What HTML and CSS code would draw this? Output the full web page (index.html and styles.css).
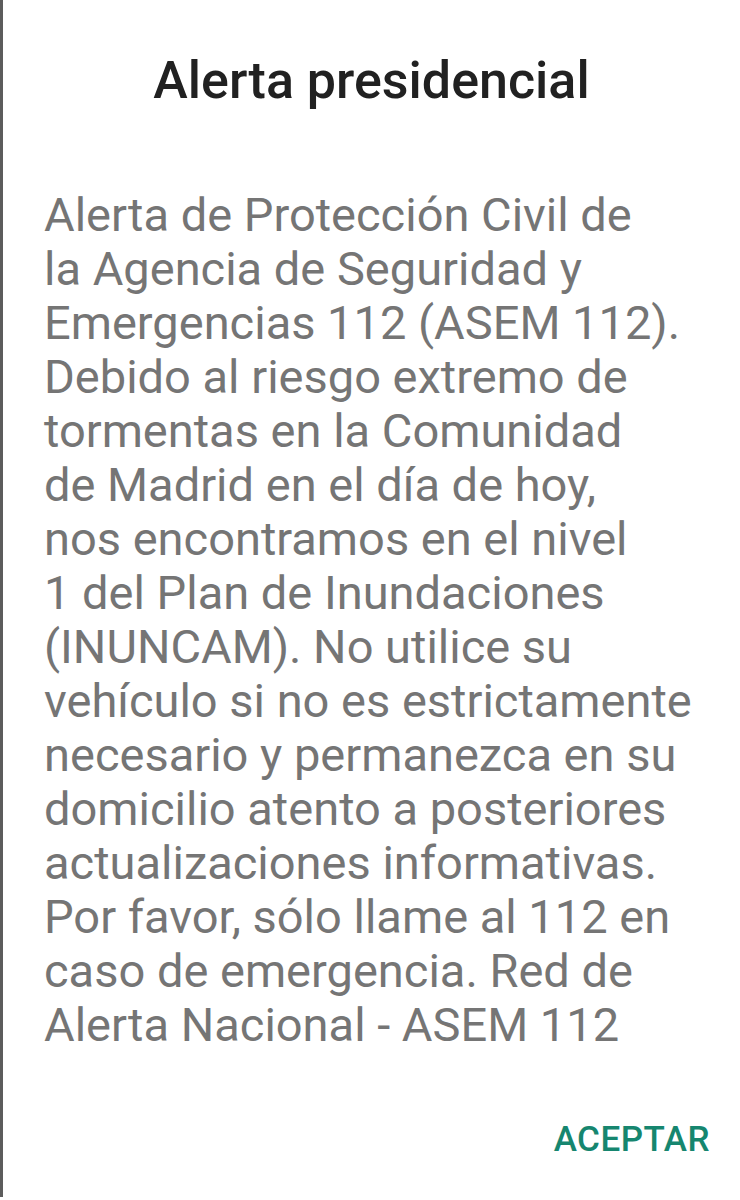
FILE: index.html
```html
<!DOCTYPE html>
<html lang="es">
<head>
<meta charset="utf-8">
<link rel="stylesheet" href="styles.css">
</head>
<body>
<div class="dialog">
  <h1 class="title">Alerta presidencial</h1>
  <p class="message">Alerta de Protección Civil de<br>la Agencia de Seguridad y<br>Emergencias 112 (ASEM 112).<br>Debido al riesgo extremo de<br>tormentas en la Comunidad<br>de Madrid en el día de hoy,<br>nos encontramos en el nivel<br>1 del Plan de Inundaciones<br>(INUNCAM). No utilice su<br>vehículo si no es estrictamente<br>necesario y permanezca en su<br>domicilio atento a posteriores<br>actualizaciones informativas.<br>Por favor, sólo llame al 112 en<br>caso de emergencia. Red de<br>Alerta Nacional - ASEM 112</p>
  <div class="actions">
    <button class="btn">ACEPTAR</button>
  </div>
</div>
</body>
</html>
```

FILE: styles.css
```css
html, body {
  margin: 0;
  padding: 0;
  background: #ffffff;
}
body {
  font-family: Roboto, "Noto Sans", sans-serif;
}
.dialog {
  width: 740px;
  height: 1197px;
  box-sizing: border-box;
  border-left: 3px solid #5c5c5c;
  background: #ffffff;
  display: flex;
  flex-direction: column;
}
.title {
  margin: 51px 0 0 0;
  font-size: 52px;
  line-height: 60px;
  font-weight: 500;
  color: #212121;
  text-align: center;
}
.message {
  margin: 77px 0 0 41px;
  font-size: 47px;
  line-height: 54px;
  color: #757575;
  font-weight: 400;
}
.actions {
  display: flex;
  justify-content: flex-end;
  margin-top: auto;
  padding: 0 30px 37px 0;
}
.btn {
  border: none;
  background: none;
  padding: 0;
  font-family: Roboto, "Noto Sans", sans-serif;
  font-size: 35px;
  line-height: 40px;
  font-weight: 500;
  color: #16866f;
  letter-spacing: 0.5px;
}
```
